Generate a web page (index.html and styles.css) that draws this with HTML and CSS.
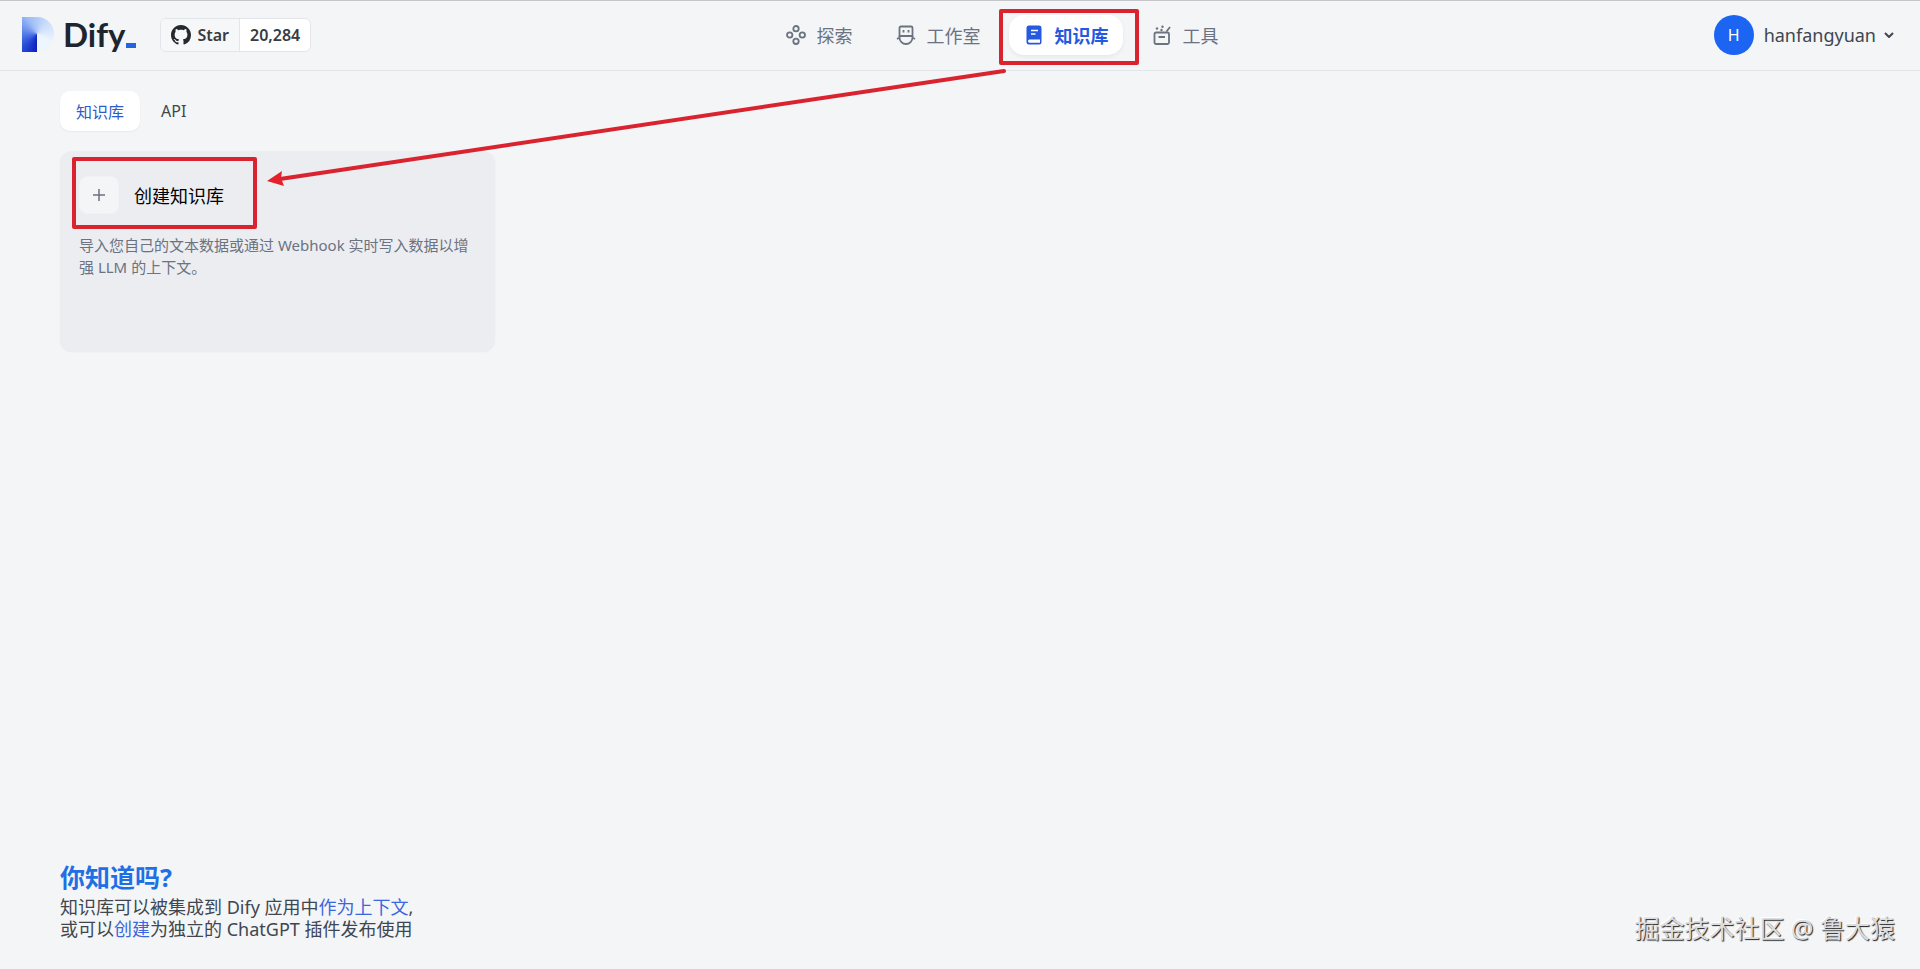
FILE: index.html
```html
<!DOCTYPE html>
<html lang="zh-CN">
<head>
  <meta charset="UTF-8" />
  <meta name="viewport" content="width=device-width, initial-scale=1" />
  <title>知识库 - Dify</title>
  <link rel="stylesheet" href="styles.css">
</head>
<body>

  <!-- Header -->
  <header class="header">
    <div class="header-left">
      <a class="logo" href="#">
        <span class="logo-mark"></span>
        <span class="logo-text">Dify</span>
        <span class="logo-cursor"></span>
      </a>
      <a class="github" href="#">
        <span class="github-star">
          <svg width="20" height="20" viewBox="0 0 16 16" fill="#24292f" aria-hidden="true">
            <path d="M8 0C3.58 0 0 3.58 0 8c0 3.54 2.29 6.53 5.47 7.59.4.07.55-.17.55-.38 0-.19-.01-.82-.01-1.49-2.01.37-2.53-.49-2.69-.94-.09-.23-.48-.94-.82-1.13-.28-.15-.68-.52-.01-.53.63-.01 1.08.58 1.23.82.72 1.21 1.87.87 2.33.66.07-.52.28-.87.51-1.07-1.78-.2-3.64-.89-3.64-3.95 0-.87.31-1.59.82-2.15-.08-.2-.36-1.02.08-2.12 0 0 .67-.21 2.2.82.64-.18 1.32-.27 2-.27s1.36.09 2 .27c1.53-1.04 2.2-.82 2.2-.82.44 1.1.16 1.92.08 2.12.51.56.82 1.27.82 2.15 0 3.07-1.87 3.75-3.65 3.95.29.25.54.73.54 1.48 0 1.07-.01 1.93-.01 2.2 0 .21.15.46.55.38A8.01 8.01 0 0 0 16 8c0-4.42-3.58-8-8-8z" />
          </svg>
          Star
        </span>
        <span class="github-count">20,284</span>
      </a>
    </div>

    <nav class="nav">
      <a class="nav-item" href="#">
        <svg width="20" height="20" viewBox="0 0 20 20" fill="none" stroke="currentColor" stroke-width="1.8" aria-hidden="true">
          <circle cx="10" cy="3.7" r="2.7" />
          <circle cx="3.7" cy="10" r="2.7" />
          <circle cx="16.3" cy="10" r="2.7" />
          <circle cx="10" cy="16.3" r="2.7" />
        </svg>
        探索
      </a>
      <a class="nav-item" href="#">
        <svg width="20" height="20" viewBox="0 0 20 20" fill="none" stroke="currentColor" stroke-width="1.8" aria-hidden="true">
          <path d="M5 1.5H15Q16.500 1.500 16.500 3V11H3.500V3Q3.500 1.500 5 1.500Z" />
          <path d="M3.500 11V12.500A6.500 6.500 0 0 0 16.500 12.500V11M1 14L3.500 12.500M19 14L16.500 12.500" />
          <path d="M7.500 5V7.500M12.500 5V7.500" />
        </svg>
        工作室
      </a>
      <a class="nav-item active" href="#">
        <svg width="20" height="20" viewBox="0 0 20 20" aria-hidden="true">
          <path d="M5 0.500H15Q17.500 0.500 17.500 3V17Q17.500 19.500 15 19.500H5Q2.500 19.500 2.500 17V3Q2.500 0.500 5 0.500Z" fill="currentColor" />
          <path d="M7 5.500H14M7 9H11.500" stroke="#fff" stroke-width="1.500" />
          <path d="M16 14.500H5.500Q4 14.500 4 16T5.500 17.700H16Z" fill="#fff" />
        </svg>
        知识库
      </a>
      <a class="nav-item" href="#">
        <svg width="20" height="20" viewBox="0 0 20 20" fill="none" stroke="currentColor" stroke-width="1.8" aria-hidden="true">
          <rect x="2.500" y="7.500" width="14.500" height="11.500" rx="1.500" />
          <path d="M6.500 12H13M14.500 6.500L18 2" />
          <g fill="currentColor" stroke="none">
            <circle cx="5" cy="3.500" r="1.200" />
            <circle cx="10.500" cy="1.700" r="1.200" />
            <circle cx="9.500" cy="5" r="1.200" />
          </g>
        </svg>
        工具
      </a>
    </nav>

    <button class="user" type="button">
      <span class="avatar">H</span>
      <span>hanfangyuan</span>
      <svg width="10" height="6" viewBox="0 0 10 6" fill="none" stroke="currentColor" stroke-width="2" aria-hidden="true">
        <path d="M1 1L5 5L9 1" />
      </svg>
    </button>
  </header>

  <!-- Content -->
  <main class="main">
    <div class="tabs">
      <button class="tab active" type="button">知识库</button>
      <button class="tab" type="button">API</button>
    </div>

    <div class="cards">
      <a class="card" href="#">
        <span class="card-head">
          <span class="card-icon">
            <svg width="12" height="12" viewBox="0 0 12 12" fill="none" stroke="currentColor" stroke-width="1.500" aria-hidden="true">
              <path d="M6 0V12M0 6H12" />
            </svg>
          </span>
          <span class="card-title">创建知识库</span>
        </span>
        <span class="card-desc">导入您自己的文本数据或通过 Webhook 实时写入数据以增强 LLM 的上下文。</span>
      </a>
    </div>
  </main>

  <!-- Footer -->
  <footer class="footer">
    <h3>你知道吗?</h3>
    <p>知识库可以被集成到 Dify 应用中<a href="#">作为上下文</a>,<br>或可以<a href="#">创建</a>为独立的 ChatGPT 插件发布使用</p>
  </footer>

  <!-- Annotations drawn over the page -->
  <svg class="marks" width="1160" height="240" viewBox="0 0 1160 240" aria-hidden="true">
    <g fill="none" stroke="#d9232e" stroke-width="4" stroke-linejoin="round" stroke-linecap="round">
      <rect x="1001" y="11" width="136" height="52" />
      <rect x="74" y="159" width="181" height="68" />
      <path d="M1004 71L280 179" />
    </g>
    <path d="M267 181L282 171L281 178L284 186Z" fill="#e3202c" />
  </svg>
  <div class="watermark">掘金技术社区 @ 鲁大猿</div>

</body>
</html>
```
FILE: styles.css
```css
/* === Body === */
* {
  box-sizing: border-box;
}

body {
  position: relative;
  display: flex;
  flex-direction: column;
  min-height: 100vh;
  margin: 0;
  background: #f3f5f7;
  color: #3f4650;
  font-family: "Noto Sans", "Noto Sans CJK SC", sans-serif;
  font-size: 18px;
}

a {
  text-decoration: none;
}

button {
  border: none;
  background: none;
  color: inherit;
  font: inherit;
  cursor: pointer;
}

svg {
  flex-shrink: 0;
}

/* === Header === */
.header {
  display: flex;
  align-items: center;
  justify-content: space-between;
  height: 71px;
  padding: 0 26px 2px 22px;
  border-top: 1px solid #c4c6cc;
  border-bottom: 1px solid #e2e5ea;
}

.header-left {
  display: flex;
  align-items: center;
  gap: 24px;
}

.logo {
  display: flex;
  align-items: center;
  color: #1d2530;
}

.logo-mark {
  width: 32px;
  height: 35px;
  background: conic-gradient(from 180deg at 15px 17px, #0a1fc0 0deg, #2346d4 40deg, #5f86ec 100deg, #9dbcf7 150deg, #c9dcfb 220deg, #edf5fd 300deg);
  clip-path: path("M0 0H15A17 17 0 0 1 15 34V35H0Z");
}

.logo-text {
  margin-left: 9px;
  font-family: Lato, sans-serif;
  font-size: 33px;
  font-weight: 700;
  line-height: 35px;
}

.logo-cursor {
  align-self: flex-end;
  width: 10px;
  height: 5px;
  margin: 0 0 4px 1px;
  background: #2464df;
}

.github {
  display: flex;
  height: 34px;
  border: 1px solid #e2e5e9;
  border-radius: 6px;
  background: #fff;
  color: #383b42;
  font-size: 16px;
  font-weight: 600;
  overflow: hidden;
}

.github-star,
.github-count {
  display: flex;
  align-items: center;
  gap: 6px;
  padding: 0 10px;
}

.github-star {
  border-right: 1px solid #e2e5e9;
  background: #f5f7f9;
}

/* === Navigation === */
.nav {
  display: flex;
  gap: 14px;
}

.nav-item {
  display: flex;
  align-items: center;
  gap: 10px;
  height: 40px;
  padding: 0 15px;
  border-radius: 15px;
  color: #6b7280;
  white-space: nowrap;
}

.nav-item.active {
  background: #fff;
  box-shadow: 0 2px 4px rgba(16, 24, 40, 0.06);
  color: #2559e0;
  font-weight: 700;
}

/* === User === */
.user {
  display: flex;
  align-items: center;
  gap: 8px;
  padding: 0 0 0 20px;
}

.avatar {
  width: 40px;
  height: 40px;
  margin-right: 2px;
  border-radius: 50%;
  background: #1c64f2;
  color: #fff;
  font-size: 16px;
  line-height: 40px;
}

/* === Tabs === */
.main {
  flex: 1;
  padding: 20px 60px 0;
}

.tabs {
  display: flex;
  gap: 5px;
  margin-bottom: 20px;
}

.tab {
  height: 40px;
  padding: 0 16px;
  border-radius: 10px;
  font-size: 16px;
}

.tab.active {
  background: #fff;
  box-shadow: 0 1px 2px rgba(16, 24, 40, 0.05);
  color: #2f5cc8;
}

/* === Cards === */
.cards {
  display: grid;
  grid-template-columns: repeat(4, 1fr);
  gap: 20px;
}

.card {
  min-height: 200px;
  padding: 25px 19px;
  border-radius: 12px;
  background: #ecedf1;
  box-shadow: 0 1px 2px rgba(16, 24, 40, 0.05);
  color: #6b7280;
}

.card-head {
  display: flex;
  align-items: center;
  gap: 15px;
}

.card-icon {
  display: flex;
  align-items: center;
  justify-content: center;
  width: 40px;
  height: 38px;
  border: 1px solid #f0f2f5;
  border-radius: 8px;
  background: #f4f5f7;
}

.card-title {
  color: #000;
}

.card-desc {
  display: block;
  margin-top: 20px;
  font-size: 15px;
  line-height: 22px;
}

/* === Footer === */
.footer {
  padding: 0 60px 29px;
}

.footer h3 {
  margin: 0;
  color: #1f6fe5;
  font-size: 25px;
  line-height: 38px;
}

.footer p {
  margin: 0;
  line-height: 22px;
}

.footer a {
  color: #3c66dd;
}

/* === Overlays === */
.marks {
  position: absolute;
  top: 0;
  left: 0;
  pointer-events: none;
}

.watermark {
  position: absolute;
  right: 25px;
  bottom: 23px;
  color: #dcdde0;
  font-size: 25px;
  line-height: 36px;
  text-shadow: 1px 1px 1px #222, -1px -1px 1px #fff;
}
```
